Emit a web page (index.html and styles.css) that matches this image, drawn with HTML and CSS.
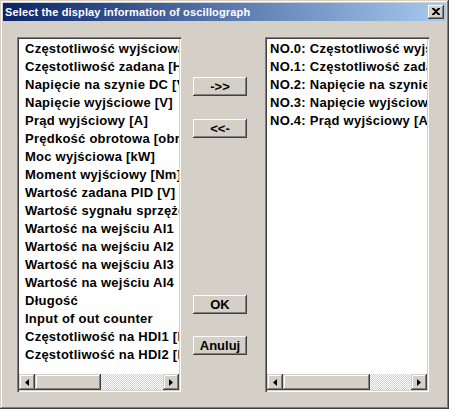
FILE: index.html
```html
<!DOCTYPE html>
<html>
<head>
<meta charset="utf-8">
<link rel="stylesheet" href="styles.css">
</head>
<body>
<div class="window">
  <div class="titlebar">
    <span class="title">Select the display information of oscillograph</span>
    <span class="close"><svg width="8" height="7" viewBox="0 0 8 7"><path d="M0 0h2l2 2 2-2h2v1L5 3.5 8 6v1H6L4 5 2 7H0V6l3-2.5L0 1z" fill="#000"/></svg></span>
  </div>
  <div class="content">
    <div class="listbox left">
      <div class="items">
        <div class="item">Częstotliwość wyjściowa [Hz]</div>
        <div class="item">Częstotliwość zadana [Hz]</div>
        <div class="item">Napięcie na szynie DC [V]</div>
        <div class="item">Napięcie wyjściowe [V]</div>
        <div class="item">Prąd wyjściowy [A]</div>
        <div class="item">Prędkość obrotowa [obr/min]</div>
        <div class="item">Moc wyjściowa [kW]</div>
        <div class="item">Moment wyjściowy [Nm]</div>
        <div class="item">Wartość zadana PID [V]</div>
        <div class="item">Wartość sygnału sprzężenia PID [V]</div>
        <div class="item">Wartość na wejściu AI1</div>
        <div class="item">Wartość na wejściu AI2</div>
        <div class="item">Wartość na wejściu AI3</div>
        <div class="item">Wartość na wejściu AI4</div>
        <div class="item">Długość</div>
        <div class="item">Input of out counter</div>
        <div class="item">Częstotliwość na HDI1 [Hz]</div>
        <div class="item">Częstotliwość na HDI2 [Hz]</div>
      </div>
      <div class="hscroll">
        <span class="arrow"><svg width="4" height="7" viewBox="0 0 4 7"><path d="M4 0v7L0 3.5z" fill="#000"/></svg></span>
        <span class="track"><span class="thumb thumb-left"></span></span>
        <span class="arrow"><svg width="4" height="7" viewBox="0 0 4 7"><path d="M0 0v7l4-3.5z" fill="#000"/></svg></span>
      </div>
    </div>
    <div class="middle">
      <div class="group-top">
        <button class="btn">-&gt;&gt;</button>
        <button class="btn">&lt;&lt;-</button>
      </div>
      <div class="group-bottom">
        <button class="btn">OK</button>
        <button class="btn">Anuluj</button>
      </div>
    </div>
    <div class="listbox right">
      <div class="items">
        <div class="item">NO.0: Częstotliwość wyjściowa [Hz]</div>
        <div class="item">NO.1: Częstotliwość zadana [Hz]</div>
        <div class="item">NO.2: Napięcie na szynie DC [V]</div>
        <div class="item">NO.3: Napięcie wyjściowe [V]</div>
        <div class="item">NO.4: Prąd wyjściowy [A]</div>
      </div>
      <div class="hscroll">
        <span class="arrow"><svg width="4" height="7" viewBox="0 0 4 7"><path d="M4 0v7L0 3.5z" fill="#000"/></svg></span>
        <span class="track"><span class="thumb thumb-right"></span></span>
        <span class="arrow"><svg width="4" height="7" viewBox="0 0 4 7"><path d="M0 0v7l4-3.5z" fill="#000"/></svg></span>
      </div>
    </div>
  </div>
</div>
</body>
</html>
```

FILE: styles.css
```css
* { box-sizing: border-box; }
html, body { margin: 0; padding: 0; }
body {
  background: #d4d0c8;
  font-family: "Liberation Sans", Arial, sans-serif;
}
.window {
  width: 449px;
  height: 409px;
  background: #d4d0c8;
  padding: 3px;
  box-shadow: inset -1px -1px #404040, inset 1px 1px #d4d0c8, inset -2px -2px #808080, inset 2px 2px #ffffff;
  display: flex;
  flex-direction: column;
}
.titlebar {
  height: 18px;
  background: linear-gradient(to right, #0a246a, #a6caf0);
  display: flex;
  align-items: center;
  justify-content: space-between;
  padding: 0 2px 0 2px;
}
.title {
  color: #fff;
  font-weight: bold;
  font-size: 11px;
  letter-spacing: 0.15px;
}
.close {
  width: 16px;
  height: 14px;
  background: #d4d0c8;
  box-shadow: inset -1px -1px #404040, inset 1px 1px #ffffff, inset -2px -2px #808080;
  display: flex;
  align-items: center;
  justify-content: center;
  padding-bottom: 1px;
}
.content {
  flex: 1;
  display: flex;
  padding: 16px 0 0 14px;
}
.listbox {
  width: 164px;
  height: 355px;
  background: #fff;
  box-shadow: inset 1px 1px #808080, inset 2px 2px #404040, inset -1px -1px #ffffff, inset -2px -2px #d4d0c8;
  padding: 2px;
  display: flex;
  flex-direction: column;
  overflow: hidden;
}
.items {
  flex: 1;
  overflow: hidden;
  padding-top: 1px;
}
.item {
  height: 18px;
  line-height: 18px;
  font-size: 13px;
  font-weight: bold;
  letter-spacing: 0.25px;
  white-space: nowrap;
  color: #000;
}
.left .item { padding-left: 6px; }
.right .item { padding-left: 3px; }
.hscroll {
  height: 16px;
  display: flex;
}
.arrow {
  width: 16px;
  height: 16px;
  flex: none;
  background: #d4d0c8;
  box-shadow: inset -1px -1px #404040, inset 1px 1px #d4d0c8, inset -2px -2px #808080, inset 2px 2px #ffffff;
  display: flex;
  align-items: center;
  justify-content: center;
}
.track {
  flex: 1;
  display: flex;
  background: repeating-conic-gradient(#ffffff 0 25%, #d4d0c8 0 50%) 0 0 / 2px 2px;
}
.thumb {
  height: 16px;
  background: #d4d0c8;
  box-shadow: inset -1px -1px #404040, inset 1px 1px #d4d0c8, inset -2px -2px #808080, inset 2px 2px #ffffff;
}
.thumb-left { width: 66px; }
.thumb-right { width: 87px; }
.middle {
  width: 84px;
  display: flex;
  flex-direction: column;
  padding-left: 12px;
}
.group-top {
  display: flex;
  flex-direction: column;
  gap: 23px;
  padding-top: 40px;
}
.group-bottom {
  display: flex;
  flex-direction: column;
  gap: 22px;
  padding-top: 157px;
}
.btn {
  width: 54px;
  height: 19px;
  background: #d4d0c8;
  border: none;
  padding: 0;
  font-family: "Liberation Sans", Arial, sans-serif;
  font-size: 13px;
  font-weight: bold;
  color: #000;
  box-shadow: inset -1px -1px #404040, inset 1px 1px #ffffff, inset -2px -2px #808080, inset 2px 2px #d4d0c8;
}
```
